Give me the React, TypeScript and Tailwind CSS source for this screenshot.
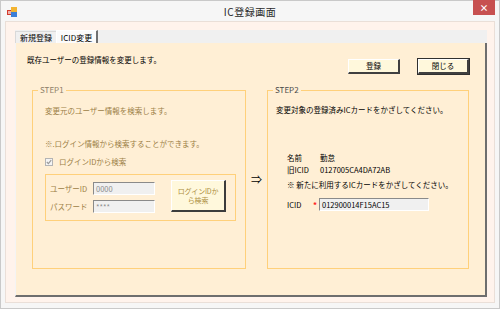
import React from "react";

const font = { fontFamily: '"Noto Sans CJK JP", "Noto Sans", sans-serif' };

function AppIcon() {
  return (
    <svg width="10" height="10" viewBox="0 0 10 10">
      <rect x="0" y="3" width="5" height="5" fill="#d33a2c" />
      <rect x="4" y="0" width="6" height="5" fill="#f3b431" />
      <rect x="4" y="5" width="6" height="5" fill="#3d7fd6" />
      <rect x="1" y="4" width="3" height="3" fill="#fff" opacity="0.6" />
    </svg>
  );
}

function WinButton({ label, isDefault }: { label: string; isDefault?: boolean }) {
  return (
    <div
      className={`h-[15px] flex items-center justify-center bg-[#fff8dc] text-[7.5px] text-black border-t border-l border-t-white border-l-white border-r-2 border-b-2 border-r-[#404040] border-b-[#404040] ${
        isDefault ? "outline outline-1 outline-[#303030] w-[51px]" : "w-[52px]"
      }`}
    >
      {label}
    </div>
  );
}

function TextBox({ value, width, muted }: { value: string; width: string; muted?: boolean }) {
  return (
    <div
      className={`${width} h-[13px] bg-[#f0f0f0] border-t border-l border-t-[#8a8a8a] border-l-[#8a8a8a] border-r border-b border-r-white border-b-white flex items-center pl-[2px] text-[7.5px] leading-none ${
        muted ? "text-[#8c8c8c]" : "text-black"
      }`}
    >
      {value}
    </div>
  );
}

export default function App() {
  return (
    <div
      className="w-[500px] h-[309px] bg-[#f6f6f6] border border-[#c9c9c9] flex flex-col select-none"
      style={font}
    >
      {/* title bar */}
      <div className="relative h-[20px] flex items-center justify-center">
        <div className="absolute left-[6px] top-[6px]">
          <AppIcon />
        </div>
        <span className="text-[10px] text-[#2a2a2a] tracking-[0.5px]">IC登録画面</span>
        <div className="absolute right-[4px] top-[-1px] w-[22px] h-[15px] bg-[#c75050] flex items-center justify-center text-white text-[9px] font-bold leading-none">
          ×
        </div>
      </div>

      {/* client */}
      <div className="flex-1 mx-[4px] mb-[5px] bg-[#fff3ec] border border-[#eadfd8] flex flex-col pl-[9px] pr-[7px] pt-[8px] pb-[5px]">
        {/* tabs */}
        <div className="h-[13px] bg-[#f0f0f0] flex items-end text-[8px] leading-none text-black">
          <div className="h-[12px] w-[41px] flex items-center justify-center border-t border-l border-[#d9d9d9] bg-[#f0f0f0]">
            新規登録
          </div>
          <div className="h-[14px] w-[42px] -mb-[1px] flex items-center justify-center bg-[#fbfbfb] border-t border-l border-t-white border-l-white border-r-2 border-r-[#707070]">
            ICID変更
          </div>
        </div>

        {/* tab page */}
        <div className="flex-1 bg-[#ffefd5] border-l border-l-[#f4f4f4] border-r-2 border-b-2 border-r-[#6e6e6e] border-b-[#6e6e6e] pt-[11px] pl-[11px] pr-[16px] flex flex-col">
          <div className="flex items-start">
            <span className="text-[7.5px] leading-[12px] text-black">既存ユーザーの登録情報を変更します。</span>
            <div className="ml-auto mt-[5px] flex gap-[18px]">
              <WinButton label="登録" />
              <WinButton label="閉じる" isDefault />
            </div>
          </div>

          <div className="flex mt-[16px] ml-[5px] h-[179px]">
            {/* STEP1 */}
            <div className="relative w-[214px] border border-[#ffd07a] pl-[12px] pt-[14px] text-[7.5px] leading-[12px] text-[#9c8046]">
              <span className="absolute left-[5px] -top-[6px] px-[2px] bg-[#ffefd5] text-[8px] leading-[10px] text-[#8e806a]">
                STEP1
              </span>
              <div>変更元のユーザー情報を検索します。</div>
              <div className="mt-[21px]">※.ログイン情報から検索することができます。</div>
              <div className="mt-[6px] flex items-center gap-[6px]">
                <div className="w-[8px] h-[8px] border border-[#b4b4b4] bg-[#f4f4f4] flex items-center justify-center">
                  <svg width="6" height="6" viewBox="0 0 6 6">
                    <path d="M0.8 3 L2.4 4.6 L5.2 1.2" fill="none" stroke="#9a9a9a" strokeWidth="1.2" />
                  </svg>
                </div>
                <span>ログインIDから検索</span>
              </div>
              <div className="mt-[6px] w-[191px] h-[47px] border border-[#ffd07a] flex items-start pl-[4px]">
                <div className="flex flex-col gap-[5px] mt-[7px]">
                  <div className="flex items-center">
                    <span className="w-[43px]">ユーザーID</span>
                    <TextBox value="0000" width="w-[62px]" muted />
                  </div>
                  <div className="flex items-center">
                    <span className="w-[43px]">パスワード</span>
                    <TextBox value="****" width="w-[62px]" muted />
                  </div>
                </div>
                <div className="ml-[16px] mt-[5px] w-[55px] h-[32px] bg-[#fff8dc] border-t border-l border-t-white border-l-white border-r-2 border-b-2 border-r-[#3c3c3c] border-b-[#3c3c3c] flex flex-col items-center justify-center text-[7px] leading-[9px] tracking-[-0.2px] text-[#ad8f40]">
                  <span>ログインIDか</span>
                  <span>ら検索</span>
                </div>
              </div>
            </div>

            {/* arrow */}
            <div className="w-[21px] flex items-center justify-center text-[11px] text-black">⇒</div>

            {/* STEP2 */}
            <div className="relative w-[202px] border border-[#ffd07a] pl-[8px] pt-[13px] text-[7.5px] leading-[12px] text-black">
              <span className="absolute left-[5px] -top-[6px] px-[2px] bg-[#ffefd5] text-[8px] leading-[10px] text-[#4a4a4a]">
                STEP2
              </span>
              <div>変更対象の登録済みICカードをかざしてください。</div>
              <div className="ml-[11px] mt-[36px]">
                <div className="flex">
                  <span className="w-[33px]">名前</span>
                  <span>勤怠</span>
                </div>
                <div className="flex">
                  <span className="w-[33px]">旧ICID</span>
                  <span>0127005CA4DA72AB</span>
                </div>
                <div className="mt-[3px]">※ 新たに利用するICカードをかざしてください。</div>
                <div className="mt-[7px] flex items-center">
                  <span className="w-[26px]">ICID</span>
                  <span className="w-[6px] text-[#ff2020] font-bold text-[8px]">*</span>
                  <TextBox value="012900014F15AC15" width="w-[110px]" />
                </div>
              </div>
            </div>
          </div>
        </div>
      </div>
    </div>
  );
}
